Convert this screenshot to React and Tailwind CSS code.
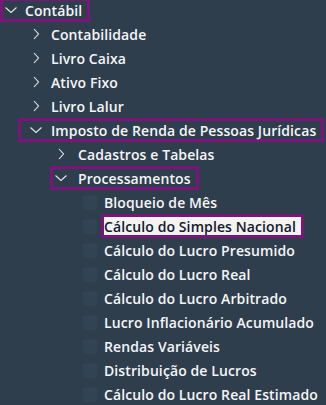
const tree = [
  { label: 'Contábil', level: 0, open: true, box: true },
  { label: 'Contabilidade', level: 1 },
  { label: 'Livro Caixa', level: 1 },
  { label: 'Ativo Fixo', level: 1 },
  { label: 'Livro Lalur', level: 1 },
  { label: 'Imposto de Renda de Pessoas Jurídicas', level: 1, open: true, box: true },
  { label: 'Cadastros e Tabelas', level: 2 },
  { label: 'Processamentos', level: 2, open: true, box: true },
  { label: 'Bloqueio de Mês', level: 3, leaf: true },
  { label: 'Cálculo do Simples Nacional', level: 3, leaf: true, selected: true },
  { label: 'Cálculo do Lucro Presumido', level: 3, leaf: true },
  { label: 'Cálculo do Lucro Real', level: 3, leaf: true },
  { label: 'Cálculo do Lucro Arbitrado', level: 3, leaf: true },
  { label: 'Lucro Inflacionário Acumulado', level: 3, leaf: true },
  { label: 'Rendas Variáveis', level: 3, leaf: true },
  { label: 'Distribuição de Lucros', level: 3, leaf: true },
  { label: 'Cálculo do Lucro Real Estimado', level: 3, leaf: true },
];

// row indent, padding inside the box, gap between chevron and label
const levels = [
  { row: 'pl-0', box: 'pl-[2px]', gap: 'gap-[8px]' },
  { row: 'pl-[18px]', box: 'pl-[9px]', gap: 'gap-[9px]' },
  { row: 'pl-[50px]', box: 'pl-[2px]', gap: 'gap-[11px]' },
  { row: 'pl-[79px]', box: 'pl-0', gap: 'gap-0' },
];

function Chevron({ open }) {
  return (
    <svg width="12" height="12" viewBox="0 0 12 12" className="shrink-0">
      {open ? (
        <path d="M0.5 3.5 L6 8.5 L11.5 3.5" fill="none" stroke="#e6e9ec" strokeWidth="1.1" />
      ) : (
        <path d="M4 1 L8.5 6 L4 11" fill="none" stroke="#e6e9ec" strokeWidth="1.1" />
      )}
    </svg>
  );
}

function LeafIcon() {
  return (
    <svg width="22" height="22" viewBox="0 0 22 22" className="shrink-0 opacity-30">
      <path d="M3 6 Q11 1 19 6 L17 18 Q11 21 5 18 Z" fill="#3b4f63" />
    </svg>
  );
}

function Row({ node }) {
  const lv = levels[node.level];
  let box = 'border-transparent';
  if (node.box) box = 'border-[#7a167a]';
  if (node.selected) box = 'border-[#7a167a] bg-[#f3f3f3] text-[#111827]';

  return (
    <div className={`h-6 flex items-center ${lv.row}`}>
      {node.leaf && <LeafIcon />}
      <div className={`h-6 flex items-center border-[3px] pr-[5px] ${lv.box} ${lv.gap} ${box}`}>
        {!node.leaf && <Chevron open={node.open} />}
        <span className="whitespace-nowrap">{node.label}</span>
      </div>
    </div>
  );
}

export default function App() {
  return (
    <div
      className="w-[326px] h-[405px] overflow-hidden bg-[#2f3e4d] text-[#f5f6f8] text-[14px] font-semibold tracking-[0.1px]"
      style={{ fontFamily: '"Open Sans", "Liberation Sans", sans-serif' }}
    >
      <div className="-mt-[2px]">
        {tree.map((node) => (
          <Row key={node.label} node={node} />
        ))}
      </div>
    </div>
  );
}
